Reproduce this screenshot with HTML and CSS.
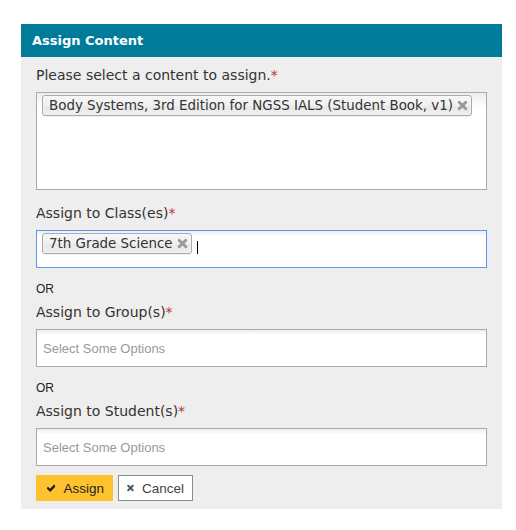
FILE: index.html
```html
<!DOCTYPE html>
<html>
<head>
<meta charset="utf-8">
<link rel="stylesheet" href="styles.css">
</head>
<body>
<div class="panel">
  <div class="panel-header">Assign Content</div>
  <div class="panel-body">
    <div class="field">
      <div class="label">Please select a content to assign.<span class="req">*</span></div>
      <div class="select select-tall">
        <div class="choices">
          <span class="chip">Body Systems, 3rd Edition for NGSS IALS (Student Book, v1)<svg class="chip-x" viewBox="0 0 10 10"><path d="M2 2 L8 8 M8 2 L2 8" stroke="#999" stroke-width="2.6" stroke-linecap="round"/></svg></span>
        </div>
      </div>
    </div>
    <div class="field">
      <div class="label">Assign to Class(es)<span class="req">*</span></div>
      <div class="select select-focus">
        <div class="choices">
          <span class="chip">7th Grade Science<svg class="chip-x" viewBox="0 0 10 10"><path d="M2 2 L8 8 M8 2 L2 8" stroke="#999" stroke-width="2.6" stroke-linecap="round"/></svg></span>
          <span class="caret"></span>
        </div>
      </div>
    </div>
    <div class="or">OR</div>
    <div class="field">
      <div class="label">Assign to Group(s)<span class="req">*</span></div>
      <div class="select"><span class="placeholder">Select Some Options</span></div>
    </div>
    <div class="or">OR</div>
    <div class="field field-last">
      <div class="label">Assign to Student(s)<span class="req">*</span></div>
      <div class="select"><span class="placeholder">Select Some Options</span></div>
    </div>
    <div class="actions">
      <button class="btn btn-primary"><svg class="btn-icon" viewBox="0 0 10 10"><path d="M1.2 5.3 L3.8 7.8 L8.9 2.5" fill="none" stroke="#1e1e1e" stroke-width="2.8" stroke-linecap="round" stroke-linejoin="round"/></svg>Assign</button>
      <button class="btn btn-default"><svg class="btn-icon" viewBox="0 0 10 10"><path d="M1.8 1.8 L8.2 8.2 M8.2 1.8 L1.8 8.2" stroke="#555" stroke-width="2.9" stroke-linecap="round"/></svg>Cancel</button>
    </div>
  </div>
</div>
</body>
</html>
```

FILE: styles.css
```css
html, body {
  margin: 0;
  padding: 0;
  background: #ffffff;
}

.panel {
  margin: 24px 0 0 21px;
  width: 481px;
  background: #eeeeee;
  font-family: "DejaVu Sans", Verdana, sans-serif;
  color: #333333;
}

.panel-header {
  height: 33px;
  line-height: 33px;
  padding-left: 11px;
  background: #007b9a;
  color: #ffffff;
  font-weight: bold;
  font-size: 13px;
}

.panel-body {
  padding: 8px 15px 8px 15px;
}

.field {
  margin-bottom: 13px;
}

.field-last {
  margin-bottom: 9px;
}

.label {
  font-size: 14px;
  line-height: 20px;
  margin-bottom: 7px;
}

.req {
  color: #c0312b;
}

.select {
  box-sizing: border-box;
  height: 38px;
  border: 1px solid #aaaaaa;
  background: linear-gradient(#eeeeee 1%, #ffffff 15%);
  display: flex;
  align-items: center;
}

.select-tall {
  height: 98px;
  align-items: flex-start;
}

.select-focus {
  border-color: #5b97f0;
  align-items: flex-start;
}

.choices {
  display: flex;
  align-items: center;
  padding: 2px 5px 0 5px;
}

.chip {
  box-sizing: border-box;
  height: 21px;
  display: inline-flex;
  align-items: center;
  padding: 0 3px 0 6px;
  border: 1px solid #aaaaaa;
  border-radius: 3px;
  background: linear-gradient(#f4f4f4 20%, #f0f0f0 50%, #e8e8e8 52%, #eeeeee 100%);
  box-shadow: 0 0 2px #ffffff inset, 0 1px 0 rgba(0, 0, 0, 0.05);
  font-size: 13.4px;
  color: #333333;
  white-space: nowrap;
}

.chip-x {
  width: 11px;
  height: 11px;
  margin-left: 4px;
}

.caret {
  display: inline-block;
  width: 0;
  height: 13px;
  border-left: 1px solid #000000;
  margin: 8px 0 0 5px;
}

.placeholder {
  padding-left: 6px;
  font-family: "Liberation Sans", Arial, sans-serif;
  font-size: 13px;
  color: #999999;
}

.or {
  font-family: "Liberation Sans", Arial, sans-serif;
  font-size: 12px;
  line-height: 16px;
  color: #222222;
  margin-top: 1px;
  margin-bottom: 5px;
}

.actions {
  display: flex;
  gap: 5px;
}

.btn {
  box-sizing: border-box;
  height: 26px;
  display: inline-flex;
  align-items: center;
  font-family: "Liberation Sans", Arial, sans-serif;
  font-size: 13.5px;
  border-radius: 0;
  cursor: pointer;
}

.btn-primary {
  background: #fec22f;
  border: 0;
  color: #222222;
  padding: 0 9px 0 11px;
  width: 77px;
}

.btn-default {
  background: #ffffff;
  border: 1px solid #8c8c8c;
  color: #444444;
  padding: 0 8px 0 8px;
  width: 75px;
}

.btn-icon {
  width: 10px;
  height: 10px;
  margin-right: 8px;
}
```
